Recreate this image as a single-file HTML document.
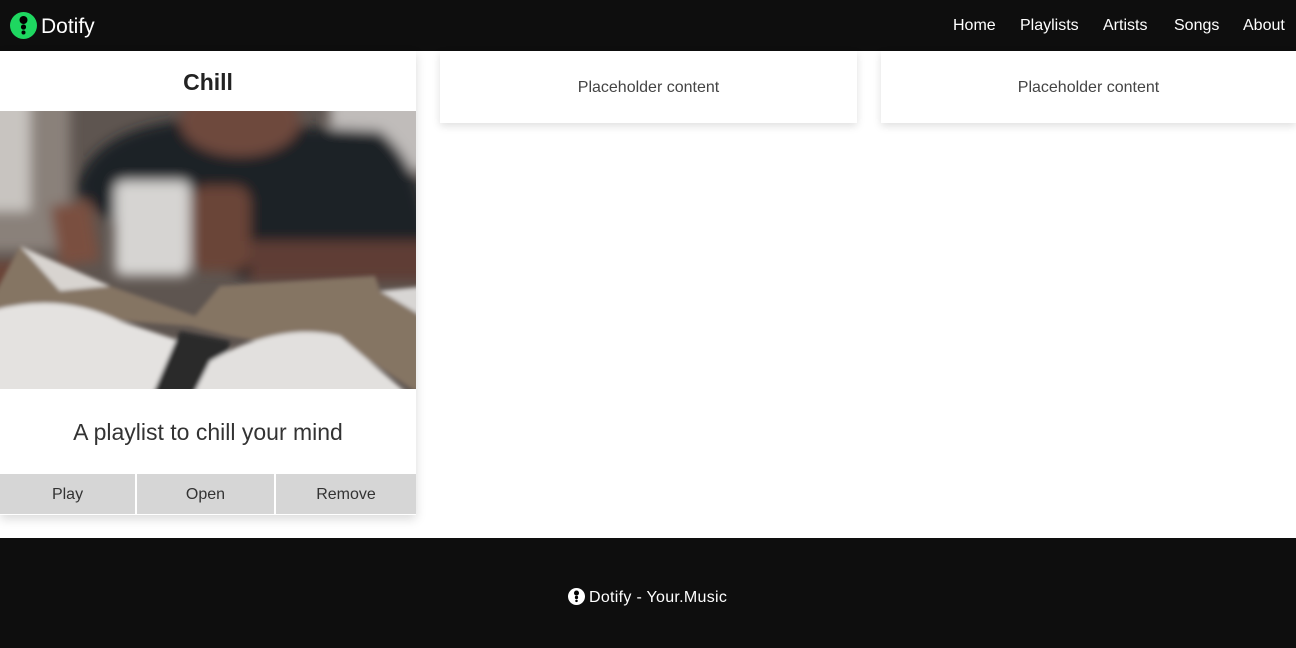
<!DOCTYPE html>
<html><head><meta charset="utf-8"><style>
*{box-sizing:border-box;margin:0;padding:0}
body{width:1296px;height:648px;overflow:hidden;font-family:"Liberation Sans",sans-serif;background:#fff;position:relative;color:#333}
.nav{position:absolute;left:0;top:0;width:1296px;height:51px;background:#0e0e0e}
.logo{position:absolute;left:10px;top:11px;display:flex;align-items:center;color:#fff;font-size:21px}
.nav a{position:absolute;top:17px;color:#fff;font-size:16px;text-decoration:none}
.card{position:absolute;left:0;top:51px;width:416px;height:464px;background:#fff;box-shadow:0 4px 10px rgba(0,0,0,.15)}
.card h2{height:60px;line-height:62px;text-align:center;font-size:23px;color:#222}
.desc{position:absolute;top:368px;width:416px;text-align:center;font-size:23px;color:#333}
.btn{position:absolute;top:423px;height:40px;background:#d6d6d6;text-align:center;line-height:41px;font-size:16px;color:#333}
.ph{position:absolute;top:51px;height:72px;background:#fff;box-shadow:0 3px 8px rgba(0,0,0,.13);text-align:center;line-height:74px;font-size:16px;color:#444}
.foot{position:absolute;left:0;top:538px;width:1296px;height:110px;background:#0e0e0e;color:#fff;font-size:16px}
</style></head><body>
<div class="nav">
<div class="logo"><svg width="27" height="27" viewBox="0 0 27 27"><circle cx="13.5" cy="13.5" r="13.5" fill="#1ed760"/><circle cx="13.5" cy="8" r="4" fill="#000"/><circle cx="13.5" cy="15" r="2.6" fill="#000"/><circle cx="13.5" cy="20.5" r="2" fill="#000"/></svg><span style="margin-left:4px;margin-top:4px">Dotify</span></div>
<a style="left:953px">Home</a><a style="left:1020px">Playlists</a><a style="left:1103px">Artists</a><a style="left:1174px">Songs</a><a style="left:1243px">About</a>
</div>
<div class="card">
<h2>Chill</h2>
<svg style="position:absolute;left:0;top:60px" width="416" height="278" viewBox="0 0 416 278">
<defs><filter id="b" x="-20%" y="-20%" width="140%" height="140%"><feGaussianBlur stdDeviation="6"/></filter><filter id="s"><feGaussianBlur stdDeviation="2"/></filter></defs>
<rect width="416" height="278" fill="#5e5550"/>
<g filter="url(#b)">
<rect x="-20" y="-20" width="90" height="160" fill="#8a817a"/>
<rect x="-20" y="-20" width="50" height="120" fill="#c8c4c0"/>
<rect x="330" y="-20" width="106" height="80" fill="#c0bcba"/>
<path d="M75 80 Q90 20 180 10 L380 20 Q430 60 430 160 L250 170 L110 110 Z" fill="#1c2126"/>
<ellipse cx="240" cy="10" rx="60" ry="35" fill="#6e4a3e"/>
<path d="M50 95 L90 90 L100 150 L60 155 Z" fill="#7a4f40"/>
<rect x="115" y="70" width="75" height="95" rx="8" fill="#d6d4d2"/>
<rect x="190" y="75" width="60" height="85" rx="15" fill="#6a4438"/>
<rect x="250" y="130" width="180" height="40" fill="#5e3e34"/>
<rect x="-20" y="150" width="60" height="30" fill="#6a4438"/>
</g>
<g filter="url(#s)">
<path d="M-10 192 L20 135 L110 175 L195 205 L220 175 L375 165 L380 180 L430 210 L430 290 L370 250 L230 225 L190 215 L-10 200 Z" fill="#857464"/>
<path d="M20 135 L110 175 L60 180 Z" fill="#d8d4d0"/>
<path d="M-10 200 Q60 180 120 210 L180 230 L160 290 L-10 290 Z" fill="#e4e2e0"/>
<path d="M180 220 L230 230 L220 290 L150 290 Z" fill="#2a2a2c"/>
<path d="M210 250 Q280 210 340 225 L416 290 L190 290 Z" fill="#e2e0de"/>
<path d="M380 180 L430 175 L430 210 Z" fill="#d8d6d4"/>
</g>
</svg>
<div class="desc">A playlist to chill your mind</div>
<div class="btn" style="left:0;width:135px">Play</div>
<div class="btn" style="left:137px;width:137px">Open</div>
<div class="btn" style="left:276px;width:140px">Remove</div>
</div>
<div class="ph" style="left:440px;width:417px">Placeholder content</div>
<div class="ph" style="left:881px;width:415px">Placeholder content</div>
<div class="foot"><div style="position:absolute;left:568px;top:51px;display:flex;align-items:flex-start"><svg style="margin-top:-1px" width="17" height="17" viewBox="0 0 27 27"><circle cx="13.5" cy="13.5" r="13.5" fill="#fff"/><circle cx="13.5" cy="8" r="4" fill="#000"/><circle cx="13.5" cy="15" r="2.6" fill="#000"/><circle cx="13.5" cy="20.5" r="2" fill="#000"/></svg><span style="margin-left:4px;letter-spacing:0.3px">Dotify - Your.Music</span></div></div>
</body></html>
